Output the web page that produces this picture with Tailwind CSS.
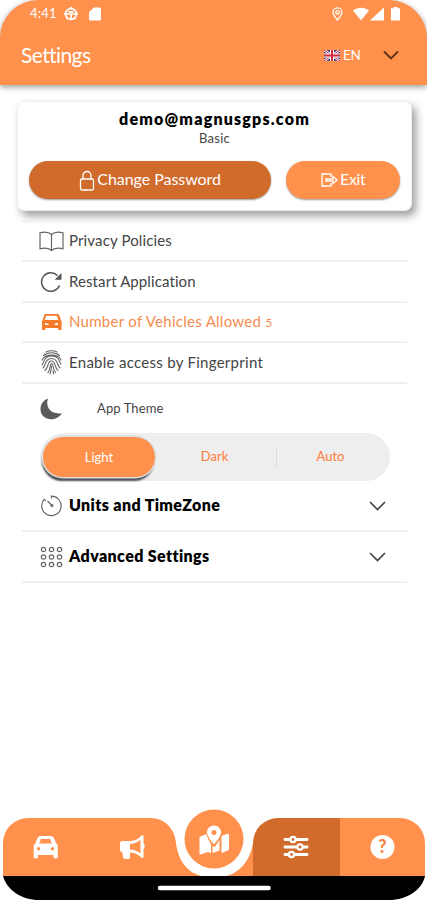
<!DOCTYPE html>
<html lang="en">
<head>
  <meta charset="UTF-8" />
  <meta name="viewport" content="width=device-width, initial-scale=1.0" />
  <title>Settings</title>
  <script src="https://cdn.jsdelivr.net/npm/@tailwindcss/browser@4"></script>
</head>
<body class="bg-white">
  <div class="relative flex h-[900px] w-[427px] flex-col overflow-hidden bg-white font-['Lato',sans-serif] text-[#444]">
    <!-- Header -->
    <header class="h-[85px] shrink-0 rounded-t-[38px] bg-[#ff914d] text-white shadow-[0_2px_6px_rgba(0,0,0,0.4)]">
      <div class="flex h-7 items-center pl-[30px] pr-[27px]">
        <span class="w-[27px] text-[13px] tracking-[0.2px]">4:41</span>
        <svg class="ml-[7px] h-[14px] w-[14px]" viewBox="0 0 14 14" fill="none" stroke="currentColor" stroke-width="1.7">
          <circle cx="7" cy="7" r="5.4" />
          <path d="M1.500 7h11M7 7v5M4.500 4.800h5M7 0v1.500M0 7h1.500M12.500 7H14M2.500 12l1-1M11.500 12l-1-1" />
        </svg>
        <svg class="ml-[11px] h-[14px] w-[12px]" viewBox="0 0 12 14" fill="currentColor">
          <path d="M5 .5h5.500a1.500 1.500 0 0 1 1.500 1.500v10a1.500 1.500 0 0 1-1.500 1.500h-9A1.500 1.500 0 0 1 0 12V5z" />
        </svg>
        <svg class="ml-auto h-[14px] w-[11px]" viewBox="0 0 11 14" fill="none" stroke="currentColor" stroke-width="1.300">
          <path d="M5.500 13C3 9.800 1 7.600 1 5.300a4.500 4.500 0 0 1 9 0C10 7.600 8 9.800 5.500 13z" />
          <circle cx="5.500" cy="5.300" r="1.700" />
        </svg>
        <svg class="ml-[10px] h-[14px] w-[16px]" viewBox="0 0 16 14" fill="currentColor"><path d="M0 3.500C5-.3 11-.3 16 3.500L8 13.500z" /></svg>
        <svg class="ml-[1px] h-[14px] w-[14px]" viewBox="0 0 14 14" fill="currentColor"><path d="M14 .5v13H0z" /></svg>
        <svg class="ml-[7px] h-[14px] w-[9px]" viewBox="0 0 9 14" fill="currentColor"><path d="M2.500 0h4v1.300H9v12.200H0V1.300h2.500z" /></svg>
      </div>
      <div class="flex h-[54px] items-center pl-[21px] pr-[28px]">
        <h1 class="text-[21px] tracking-[-0.6px]">Settings</h1>
        <svg class="ml-auto h-[11px] w-[16px]" viewBox="0 0 16 11">
          <path fill="#34457f" d="M0 0h16v11H0z" />
          <path stroke="#fff" stroke-width="2.400" d="M0 0l16 11M16 0L0 11" />
          <path stroke="#d4263f" stroke-width="1" d="M0 0l16 11M16 0L0 11" />
          <path stroke="#fff" stroke-width="4" d="M8 0v11M0 5.500h16" />
          <path stroke="#d4263f" stroke-width="2" d="M8 0v11M0 5.500h16" />
        </svg>
        <span class="ml-[3px] w-[18px] text-[13.500px] tracking-[-0.3px]">EN</span>
        <svg class="ml-[22px] h-[10px] w-[16px]" viewBox="0 0 16 10" fill="none" stroke="#5a3216" stroke-width="1.800"><path d="M1 1.500l7 7 7-7" /></svg>
      </div>
    </header>

    <!-- Account card -->
    <section class="ml-[17px] mt-[16px] h-[110px] w-[395px] shrink-0 rounded-[7px] border border-[#eee] bg-white px-[11px] shadow-[4px_5px_9px_rgba(0,0,0,0.38)]">
      <h2 class="mt-[7px] text-center text-[16px] leading-5 font-extrabold tracking-[1.2px] text-black">demo@magnusgps.com</h2>
      <p class="text-center text-[13px] leading-[18px] tracking-[0.3px]">Basic</p>
      <div class="mt-[14px] flex gap-[15px] text-[16px] text-white">
        <button class="flex h-[38px] w-[243px] items-center justify-center rounded-full bg-[#d06b2c] shadow-[0_1px_2px_rgba(0,0,0,0.4)]">
          <svg class="mr-[2px] h-[21px] w-[16px]" viewBox="0 0 16 21" fill="none" stroke="currentColor" stroke-width="1.300">
            <rect x="1.500" y="9" width="13" height="11" rx="1.500" />
            <path d="M4 9V5.500a4 4 0 0 1 8 0V9" />
          </svg>
          <span class="mb-[2px] tracking-[-0.05px]">Change Password</span>
        </button>
        <button class="flex h-[38px] w-[114px] items-center justify-center rounded-full bg-[#ff914d] shadow-[0_1px_2px_rgba(0,0,0,0.4)]">
          <svg class="mr-[2px] h-[14px] w-[17px]" viewBox="0 0 17 14" fill="none" stroke="currentColor" stroke-width="1.300">
            <path d="M10 4V1H1v12h9v-3M5 6h7V3.500L16 7l-4 3.500V8H5z" />
          </svg>
          <span class="mb-[2px] tracking-[-0.4px]">Exit</span>
        </button>
      </div>
    </section>

    <!-- Settings list -->
    <main class="ml-[22px] mt-[9px] w-[385px] border-t-2 border-[#f0f0f0]">
      <div class="flex h-[40px] items-center border-b-2 border-[#f0f0f0] pl-[17px] text-[15px]">
        <svg class="mr-[5px] h-[22px] w-[25px]" viewBox="0 0 25 22" fill="none" stroke="#666" stroke-width="1.200">
          <path d="M12.500 4.500C9.500 1.800 5 1.600 1 2.800v16c4-1 8.500-.8 11.500 1.700 3-2.500 7.500-2.700 11.500-1.700v-16c-4-1.200-8.500-1-11.500 1.700zM12.500 4.500v16" />
        </svg>
        <span class="mb-[1px] tracking-[0.14px]">Privacy Policies</span>
      </div>
      <div class="flex h-[41px] items-center border-b-2 border-[#f0f0f0] pl-[17px] text-[15px]">
        <svg class="mr-[5px] h-[22px] w-[25px]" viewBox="0 0 25 22" fill="none" stroke="#555" stroke-width="1.500">
          <path d="M20.500 14.500A9.300 9.300 0 1 1 18.500 4.500" />
          <path fill="#555" stroke="none" d="M22.500 2v6.800h-6.800z" />
        </svg>
        <span class="tracking-[0.1px]">Restart Application</span>
      </div>
      <div class="flex h-[40px] items-center border-b-2 border-[#f0f0f0] pl-[17px] text-[15px] text-[#f58c4e]">
        <svg class="mr-[5px] h-[18px] w-[25px]" viewBox="0 0 25 18" fill="#f47b2b">
          <path fill-rule="evenodd" d="M6.500 1h12c.9 0 1.500.5 1.800 1.300L21.800 7l.7 1.200V17h-3.300v-2H6.300v2H3V8.200L3.700 7l1.500-4.700C5.500 1.500 5.800 1 6.500 1zm.7 1.700L5.700 7h13.600l-1.500-4.300zM6 9.700v2.300h3.600V11zM19 9.700v2.300h-3.600V11z" />
        </svg>
        <span class="mb-[1px] tracking-[0.28px]">Number of Vehicles Allowed <span class="text-[12px]">5</span></span>
      </div>
      <div class="flex h-[41px] items-center border-b-2 border-[#f0f0f0] pl-[17px] text-[15px]">
        <svg class="mr-[5px] h-[25px] w-[25px]" viewBox="0 0 25 25" fill="none" stroke="#666" stroke-width="1.100" stroke-linecap="round">
          <path d="M7 2c3-1.600 8-1.600 11 0M4.500 5.500c4-3.600 12-3.600 16 0M3 10c3-6.500 16-6.500 19 0M3 15c2-2 1.500-9 9.500-9S20 12 22 14M4 18c3-2.500 1.500-9.500 8.500-9.500S18 16 21 18M6 20.500c4-3.500 2-9.500 6.500-9.500s3 7.500 6.500 9.500M9 22.500c3-3 1.500-9 3.500-9s1 5.500 4 9M12.500 16c0 3-.5 5-1.500 8M14 21l.8 3" />
        </svg>
        <span class="tracking-[0.28px]">Enable access by Fingerprint</span>
      </div>

      <!-- Theme selector -->
      <div class="flex h-[49px] items-center pl-[18px] text-[13px]">
        <svg class="h-[24px] w-[23px]" viewBox="0 0 23 24" fill="#5b5b5b"><path d="M8 1.500C5.500 8.500 9 18 22 16.200 15.500 26 0 23.500.5 11.500.700 7 3.500 3 8 1.500z" /></svg>
        <span class="ml-[34px] tracking-[0.1px]">App Theme</span>
      </div>
      <div class="ml-[18px] grid h-[48px] w-[350px] grid-cols-[118px_119px_1fr] items-center rounded-full bg-[#eee] text-center text-[13px] text-[#ff7b3a]">
        <div class="ml-[3px] h-[40px] w-[112px] rounded-full bg-[#ff914d] leading-[40px] text-white shadow-[0_0_0_1.5px_#dedede,-1px_4px_2px_rgba(30,40,45,0.8)]">Light</div>
        <div class="h-[20px] border-r border-[#dadada] pr-[5px]">Dark</div>
        <div class="h-[20px] pr-[6px]">Auto</div>
      </div>

      <!-- Expandable groups -->
      <div class="flex h-[51px] items-center border-b-2 border-[#f0f0f0] pl-[17px] pr-[21px] text-[16px] font-extrabold text-black">
        <svg class="mr-[5px] h-[22px] w-[25px]" viewBox="0 0 25 22" fill="none" stroke="#666" stroke-width="1.200">
          <path d="M12.500 3.500V1.200a9.700 9.700 0 1 1-7.300 3.200l1.500 1.500M8.500 6l4.500 4.500" />
          <circle cx="13" cy="10.500" r="1" />
        </svg>
        <span class="mb-[1px] tracking-[0.38px]">Units and TimeZone</span>
        <svg class="ml-auto h-[10px] w-[17px]" viewBox="0 0 17 10" fill="none" stroke="#444" stroke-width="1.700"><path d="M1 1l7.500 7.500L16 1" /></svg>
      </div>
      <div class="flex h-[51px] items-center border-b-2 border-[#f0f0f0] pl-[17px] pr-[21px] text-[16px] font-extrabold text-black">
        <svg class="mr-[5px] h-[22px] w-[25px]" viewBox="0 0 25 22" fill="none" stroke="#666" stroke-width="1.200">
          <circle cx="4.500" cy="3.500" r="2.200" /><circle cx="12.500" cy="3.500" r="2.200" /><circle cx="20.500" cy="3.500" r="2.200" />
          <circle cx="4.500" cy="11" r="2.200" /><circle cx="12.500" cy="11" r="2.200" /><circle cx="20.500" cy="11" r="2.200" />
          <circle cx="4.500" cy="18.500" r="2.200" /><circle cx="12.500" cy="18.500" r="2.200" /><circle cx="20.500" cy="18.500" r="2.200" />
        </svg>
        <span class="mb-[2px] tracking-[0.38px]">Advanced Settings</span>
        <svg class="ml-auto h-[10px] w-[17px]" viewBox="0 0 17 10" fill="none" stroke="#444" stroke-width="1.700"><path d="M1 1l7.500 7.500L16 1" /></svg>
      </div>
    </main>

    <!-- Bottom navigation -->
    <nav class="mt-auto h-[92px] w-full">
      <svg class="block h-[92px] w-[427px]" viewBox="0 808 427 92">
        <path fill="#ff914d" d="M3 877V843a25 25 0 0 1 25-25H150C166 818 175 830 176 843C178 861 189 876 207 876.500z" />
        <path fill="#ff914d" d="M221 877C239 875 250 861 253 843V877zM340 818h60a25 25 0 0 1 25 25v34h-85z" />
        <path fill="#d06b2c" d="M253 877V843a25 25 0 0 1 25-25h62v59z" />
        <path d="M3 876H425C422 890 407 900 389 900H39C21 900 7 890 3 876z" />
        <path stroke="#fff" stroke-width="4.500" stroke-linecap="round" d="M160 888H268.500" />
        <circle cx="214" cy="839" r="29.500" fill="#ff914d" />
        <!-- car -->
        <path fill="#fff" fill-rule="evenodd" d="M40.500 836h10c2 0 3 1 3.700 2.500l2 5c1 .5 1.600 1.500 1.600 3v11c0 1-3.800 1.500-4.300 0v-2.500H38v2.500c-.5 1.500-4.300 1-4.300 0v-11c0-1.500.6-2.500 1.600-3l2-5c.7-1.500 1.500-2.500 3.200-2.500zm.5 3l-1.800 4.500h12.600L50 839zM38.500 847a1.700 1.700 0 1 0 0 3.400 1.700 1.700 0 0 0 0-3.400zM52.500 847a1.700 1.700 0 1 0 0 3.400 1.700 1.700 0 0 0 0-3.400z" />
        <!-- megaphone -->
        <path fill="#fff" fill-rule="evenodd" d="M122 841h8c5 0 9-2.500 11.500-5.500 1-.7 2-.1 2 1v6.500c1.500 1.500 1.500 4.500 0 6v8c0 1-1.500 1.500-2.200.5-3-3-6-4.800-11.300-5v5c0 1-.5 1.500-1.500 1.500h-3.500c-1 0-1.500-.7-1.700-1.700L122 852c-1 0-2-1-2-2v-7c0-1 1-2 2-2zm8 3v5.500c4 .2 7.500 1.500 10.500 4v-13.800c-3 2.700-6.500 4.200-10.500 4.300z" />
        <!-- map -->
        <path fill="#fff" d="M199.500 837l7-3c.5 3 2 6 4.500 10v9.200l-3-1.200-7.500 2.500c-.7.200-1-.2-1-.8zM212.500 846c.8.900 2.200.9 3 0l4-6v10.500l-7 2.500zM221.500 836l6.200-2.200c.8-.3 1.300.2 1.300 1v14.500c0 .6-.4 1-1 1.300l-6.500 2.400z" />
        <path fill="#fff" fill-rule="evenodd" d="M214 825.500c4 0 7 3 7 6.800 0 3.300-4 8.700-6.200 11.300-.5.500-1.200.5-1.600 0-2.200-2.600-6.200-8-6.200-11.300 0-3.800 3-6.800 7-6.800zm0 4.500a2.500 2.500 0 1 0 0 5 2.500 2.500 0 0 0 0-5z" />
        <!-- sliders -->
        <g stroke="#fff" stroke-width="2.900" stroke-linecap="round" fill="#d06b2c">
          <path d="M285 839.500h22M285 847h22M285 854.500h22" />
          <g stroke-width="2.300"><circle cx="293" cy="839.500" r="2.600" /><circle cx="300" cy="847" r="2.600" /><circle cx="291.500" cy="854.500" r="2.600" /></g>
        </g>
        <circle cx="382.500" cy="847" r="12" fill="#fff" />
        <text x="382.500" y="853" text-anchor="middle" fill="#f28647" class="font-['Lato',sans-serif] text-[18px] font-black">?</text>
      </svg>
    </nav>
  </div>
</body>
</html>
